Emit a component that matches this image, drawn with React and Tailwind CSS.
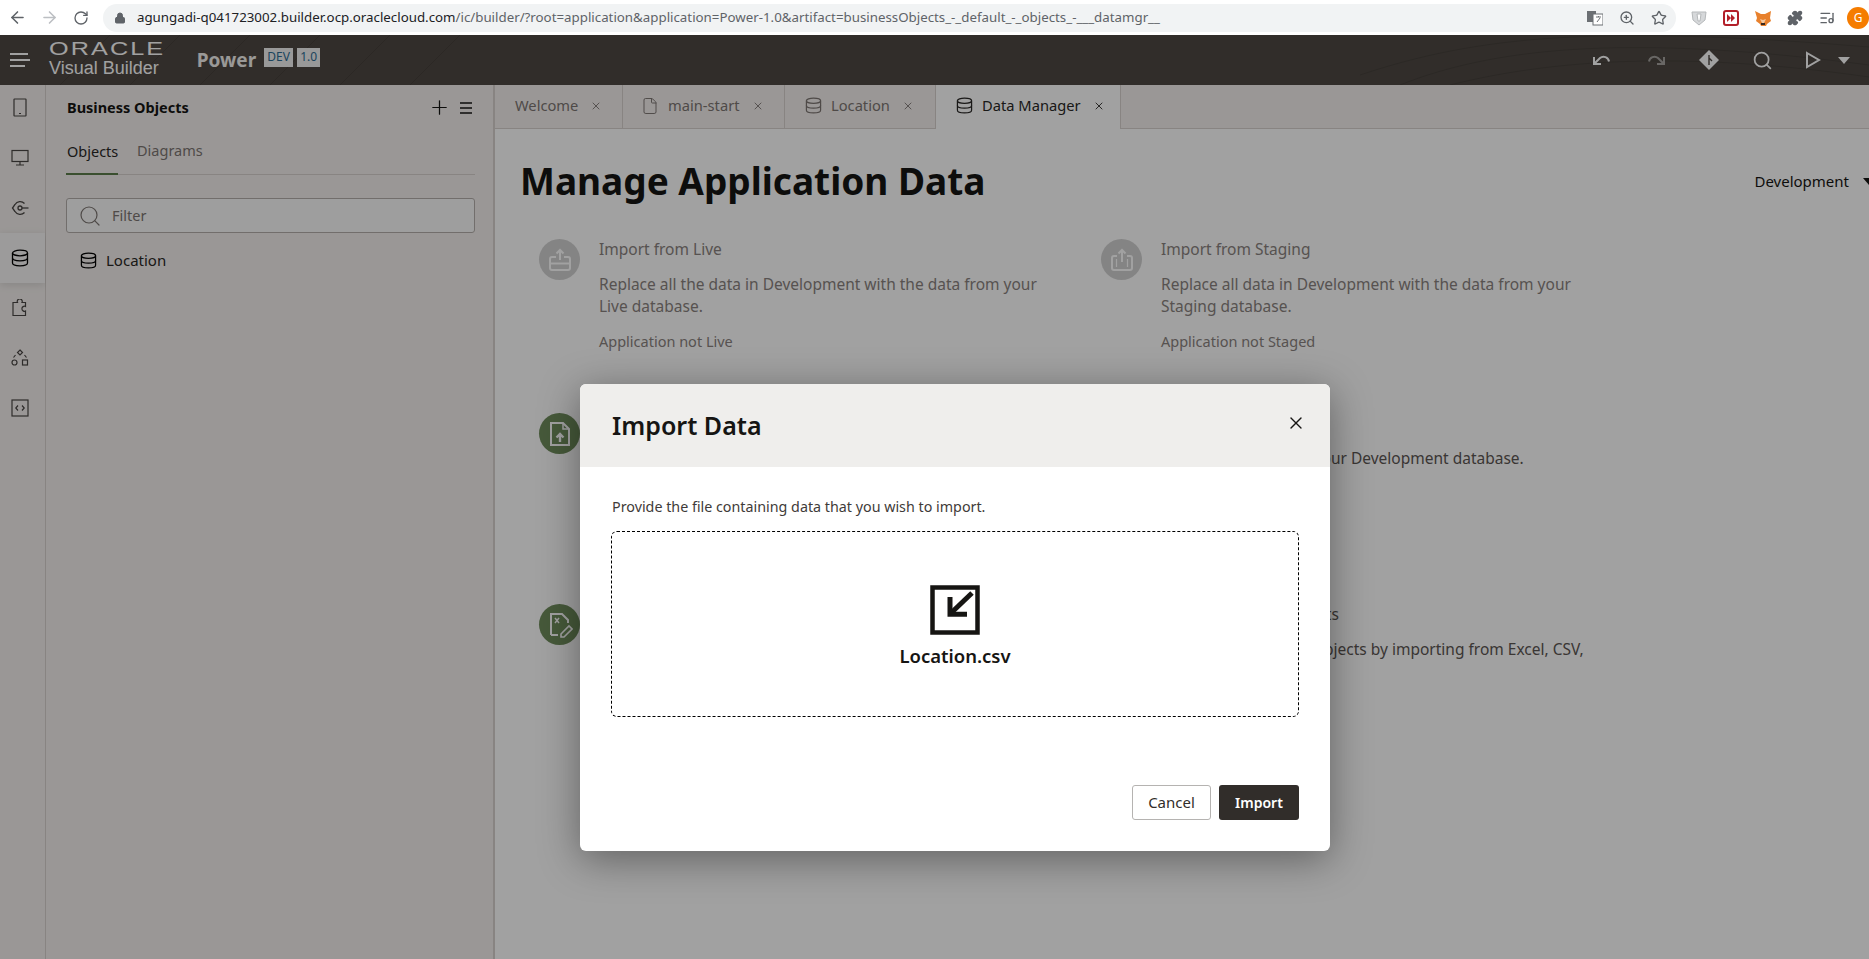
import { ArrowLeft, ArrowRight, RotateCw, Lock, ZoomIn, Star, Puzzle, ListMusic, Search, X, Plus, File } from 'lucide-react';

const DbIcon = ({ className }) => (
    <svg viewBox="0 0 18 18" className={className} fill="none" stroke="currentColor" strokeWidth="1.3">
        <ellipse cx="9" cy="4" rx="7.5" ry="2.8" />
        <path d="M1.5 4v10c0 1.6 3.4 2.8 7.5 2.8s7.5-1.2 7.5-2.8V4" />
        <path d="M1.5 9c0 1.6 3.4 2.8 7.5 2.8s7.5-1.2 7.5-2.8" />
    </svg>
);

const railIcons = [
    <svg key="phone" viewBox="0 0 18 20" className="w-[18px] h-[20px]" fill="none" stroke="currentColor" strokeWidth="1.2"><rect x="3" y="1" width="12" height="17" rx="0.5" /><path d="M8 15.5h2" /></svg>,
    <svg key="monitor" viewBox="0 0 18 18" className="w-[18px] h-[18px]" fill="none" stroke="currentColor" strokeWidth="1.2"><rect x="1" y="1.5" width="16" height="11" /><path d="M9 12.5v3M5 16h8" /></svg>,
    <svg key="service" viewBox="0 0 18 18" className="w-[18px] h-[18px]" fill="none" stroke="currentColor" strokeWidth="1.3"><path d="M13.5 4.5A6 6 0 0 0 4 5.5L1.5 9 4 12.5a6 6 0 0 0 9.5 1" /><circle cx="9" cy="9" r="2" /><path d="M11 9h6.5" /></svg>,
    <DbIcon key="db" className="w-[18px] h-[18px]" />,
    <svg key="puzzle" viewBox="0 0 18 18" className="w-[18px] h-[18px]" fill="none" stroke="currentColor" strokeWidth="1.2"><path d="M2 3.500h4.500a2.500 2.500 0 1 1 4.500 0h3.500v4a2.500 2.500 0 1 0 0 4.500v4.500H2z" /></svg>,
    <svg key="shapes" viewBox="0 0 18 18" className="w-[18px] h-[18px]" fill="none" stroke="currentColor" strokeWidth="1.2"><path d="M9 1l2.500 2.500L9 6 6.500 3.500z" /><circle cx="3.500" cy="13.500" r="2.500" /><rect x="11.500" y="11" width="5" height="5" /><path d="M2.500 8.500L4.500 6M13.500 6l2 2.500" /></svg>,
    <svg key="code" viewBox="0 0 18 18" className="w-[18px] h-[18px]" fill="none" stroke="currentColor" strokeWidth="1.2"><rect x="1" y="1" width="16" height="16" /><path d="M7 6.500L4.800 9 7 11.500M11 6.500L13.200 9 11 11.500" /></svg>,
];

const UploadCircle = ({ variant }) => (
    <div className="w-[41px] h-[41px] shrink-0 rounded-full bg-[#d2d2d2] flex items-center justify-center text-white">
        {variant === 'live' ? (
            <svg viewBox="0 0 26 26" className="w-[26px] h-[26px]" fill="none" stroke="currentColor" strokeWidth="2"><path d="M9 10H5a2 2 0 0 0-2 2v9a2 2 0 0 0 2 2h16a2 2 0 0 0 2-2v-9a2 2 0 0 0-2-2h-4" /><path d="M3 16.500h20" /><path d="M13 13V3M9.500 6.500L13 3l3.500 3.500" /></svg>
        ) : (
            <svg viewBox="0 0 26 26" className="w-[26px] h-[26px]" fill="none" stroke="currentColor" strokeWidth="2"><path d="M8 9H5a2 2 0 0 0-2 2v10a2 2 0 0 0 2 2h16a2 2 0 0 0 2-2V11a2 2 0 0 0-2-2h-3" /><path d="M13 15V3M9.500 6.500L13 3l3.500 3.500" /><path d="M7.500 12v8M18.500 12v8" strokeWidth="1.200" /></svg>
        )}
    </div>
);

const GreenCircle = ({ variant }) => (
    <div className="w-[41px] h-[41px] shrink-0 rounded-full bg-[#6f8d5c] flex items-center justify-center text-white">
        {variant === 'file' ? (
            <svg viewBox="0 0 26 26" className="w-[26px] h-[26px]" fill="none" stroke="currentColor" strokeWidth="2"><path d="M4 2h12l6 6v16H4z" /><path d="M16 2v6h6" strokeWidth="1.500" /><path d="M13 21v-8M9.500 16.500L13 13l3.500 3.500" strokeWidth="2.400" /></svg>
        ) : (
            <svg viewBox="0 0 26 26" className="w-[26px] h-[26px]" fill="none" stroke="currentColor" strokeWidth="2"><path d="M4 23V2h11l6 6v3" /><path d="M4 23h7" /><path d="M8 6l4 5M12 6l-4 5" strokeWidth="1.500" /><path d="M14 22l8-8 3 3-8 8h-3z" strokeWidth="1.600" /></svg>
        )}
    </div>
);

const rows = [
    {
        height: 'h-[174px]',
        left: { icon: <UploadCircle variant="live" />, title: 'Import from Live', desc: 'Replace all the data in Development with the data from your Live database.', note: 'Application not Live' },
        right: { icon: <UploadCircle variant="staging" />, title: 'Import from Staging', desc: 'Replace all data in Development with the data from your Staging database.', note: 'Application not Staged' },
    },
    {
        height: 'h-[191px]',
        left: { icon: <GreenCircle variant="file" />, title: 'Import from File', desc: 'Replace all the data in Development with the data from a file.' },
        right: { title: 'Export All Data', desc: 'Download all data in your Development database.', dark: true },
    },
    {
        height: 'h-[120px]',
        left: { icon: <GreenCircle variant="excel" />, title: 'Create Business Objects', desc: 'Create new business objects from a file.' },
        right: { title: 'Import Business Objects', desc: 'Create new business objects by importing from Excel, CSV, or\u00A0JSON files.', dark: true },
    },
];

const DataItem = ({ item }) => (
    <div className="flex gap-[19px]">
        {item.icon || <div className="w-[41px] h-[41px] shrink-0" />}
        <div className={`w-[452px] text-[15.500px] leading-[22px] ${item.dark ? 'text-[#5c5653]' : 'text-[#8a8380]'}`}>
            <div className="-mt-px">{item.title}</div>
            <div className="mt-[13px]">{item.desc}</div>
            {item.note && <div className="mt-[13px] text-[14.500px]">{item.note}</div>}
        </div>
    </div>
);

const tabs = [
    { label: 'Welcome', width: 'w-[128px]' },
    { label: 'main-start', width: 'w-[162px]', icon: <File className="w-[18px] h-[18px] -ml-[2px]" strokeWidth={1.3} /> },
    { label: 'Location', width: 'w-[151px]', icon: <DbIcon className="w-[17px] h-[17px]" /> },
    { label: 'Data Manager', width: 'w-[185px]', icon: <DbIcon className="w-[17px] h-[17px]" />, active: true },
];

const App = () => {
    return (
        <div className="h-screen w-full flex flex-col overflow-hidden bg-white font-['Noto_Sans',sans-serif]">
            {/* Browser bar */}
            <div className="h-[35px] shrink-0 flex items-center bg-white relative">
                <ArrowLeft className="ml-[8px] w-[19px] h-[19px] text-[#5f6368]" strokeWidth={2} />
                <ArrowRight className="ml-[13px] w-[19px] h-[19px] text-[#bcbfc3]" strokeWidth={2} />
                <RotateCw className="ml-[14px] w-[16px] h-[16px] text-[#5f6368]" strokeWidth={2} />
                <div className="ml-[14px] w-[1575px] h-[28px] rounded-full bg-[#f1f3f4] flex items-center">
                    <Lock className="ml-[11px] w-[12px] h-[12px] text-[#5f6368] fill-[#5f6368]" />
                    <div className="ml-[11px] w-[1040px] text-[13.300px] whitespace-nowrap text-[#5f6368]">
                        <span className="text-[#202124]">agungadi-q041723002.builder.ocp.oraclecloud.com</span>
                        /ic/builder/?root=application&amp;application=Power-1.0&amp;artifact=businessObjects_-_default_-_objects_-___datamgr__
                    </div>
                    <div className="ml-auto mr-[9px] flex items-center gap-[16px] text-[#5f6368]">
                        <svg viewBox="0 0 16 16" className="w-[16px] h-[16px]"><rect x="0" y="1" width="9" height="11" fill="#6b6f73" /><rect x="6" y="4" width="10" height="11" fill="#fff" stroke="#6b6f73" /><path d="M9 7h5M11.500 6v1M10 12l3-4" stroke="#6b6f73" fill="none" /></svg>
                        <ZoomIn className="w-[16px] h-[16px]" strokeWidth={2} />
                        <Star className="w-[16px] h-[16px]" strokeWidth={2} />
                    </div>
                </div>
                <div className="ml-[15px] flex items-center gap-[16px]">
                    <svg viewBox="0 0 16 16" className="w-[16px] h-[16px]" fill="#d6d8da" stroke="#b5b8ba"><path d="M1 2h14l-1 8-6 5-6-5z" /><path d="M6 4h4l-1 7H7z" fill="#fff" /></svg>
                    <div className="w-[16px] h-[16px] rounded-[3px] bg-white border-2 border-[#b3202a] flex items-center justify-center text-[#b3202a]">
                        <svg viewBox="0 0 10 10" className="w-[10px] h-[10px]" fill="currentColor"><path d="M1 1l4 4-4 4zM5 1l4 4-4 4z" /></svg>
                    </div>
                    <svg viewBox="0 0 16 16" className="w-[16px] h-[16px]"><path d="M0 1l6 3h4l6-3-1 7 1 3-4 3-1 2H6l-1-2-4-3 1-3z" fill="#e8812d" /><path d="M5 9l3 1 3-1-2 4H7z" fill="#f5c9a0" /><path d="M6 13h4v2H6z" fill="#3a2a20" /></svg>
                    <Puzzle className="w-[16px] h-[16px] text-[#5f6368] fill-[#5f6368]" />
                    <ListMusic className="w-[16px] h-[16px] text-[#5f6368]" />
                </div>
                <div className="ml-[12px] w-[22px] h-[22px] shrink-0 rounded-full bg-[#f57c00] text-white text-[12px] flex items-center justify-center">G</div>
            </div>

            <div className="relative flex-1 flex flex-col min-h-0">
                {/* App header */}
                <div className="relative h-[50px] shrink-0 bg-[#4e4843] flex items-center text-white overflow-hidden">
                    <svg className="absolute inset-0 w-full h-full" fill="none" stroke="#000" strokeOpacity="0.1">
                        <path d="M60 50L110 0M130 50L180 0M200 50L250 0M270 50L320 0M340 50L390 0M410 50L460 0" />
                        <path d="M1400 50C1500 10 1640 0 1869 30M1450 50C1550 25 1680 15 1869 42M1360 40C1480 0 1600 -10 1869 12" />
                    </svg>
                    <svg viewBox="0 0 20 14" className="relative ml-[10px] w-[20px] h-[14px]" fill="none" stroke="currentColor" strokeWidth="2"><path d="M0 1h18M0 7h20M0 13h15" /></svg>
                    <div className="relative ml-[19px] flex flex-col leading-none">
                        <span className="font-['Liberation_Sans'] text-[18px] leading-[17px] tracking-[1.500px] scale-x-[1.400] origin-left -mt-px">ORACLE</span>
                        <span className="font-['Liberation_Sans'] text-[18px] leading-[21px]">Visual Builder</span>
                    </div>
                    <span className="relative ml-[38px] text-[19px] font-bold text-[#f4f2f0]">Power</span>
                    <span className="relative ml-[8px] -mt-[6px] w-[29px] h-[19px] bg-[#f2f2f2] text-[#2f6d94] text-[12px] flex items-center justify-center">DEV</span>
                    <span className="relative ml-[4px] -mt-[6px] w-[23px] h-[19px] bg-[#f2f2f2] text-[#2f6d94] text-[12px] flex items-center justify-center">1.0</span>
                    <div className="relative ml-auto flex items-center">
                        <svg viewBox="0 0 20 18" className="w-[20px] h-[18px]" fill="none" stroke="#fff" strokeWidth="2"><path d="M2 6v7h7" /><path d="M2.500 12.500L8 7a5.500 5.500 0 0 1 9 3.500" /></svg>
                        <svg viewBox="0 0 20 18" className="ml-[34px] w-[20px] h-[18px] opacity-50" fill="none" stroke="#fff" strokeWidth="2"><path d="M18 6v7h-7" /><path d="M17.500 12.500L12 7a5.500 5.500 0 0 0-9 3.500" /></svg>
                        <svg viewBox="0 0 20 20" className="ml-[33px] w-[20px] h-[20px]"><path d="M10 0l10 10-10 10L0 10z" fill="#fff" /><path d="M10 5v10M10 8l3 3" stroke="#4e4843" strokeWidth="1.400" fill="none" /></svg>
                        <Search className="ml-[33px] w-[21px] h-[21px]" strokeWidth={2} />
                        <svg viewBox="0 0 16 18" className="ml-[32px] w-[16px] h-[18px]" fill="none" stroke="#fff" strokeWidth="2"><path d="M2 2l12 7-12 7z" /></svg>
                        <svg viewBox="0 0 12 7" className="ml-[17px] mr-[19px] w-[12px] h-[7px]" fill="#fff"><path d="M0 0h12L6 7z" /></svg>
                    </div>
                </div>

                <div className="flex-1 flex min-h-0">
                    {/* Navigator rail */}
                    <div className="w-[46px] shrink-0 bg-[#f4f0ee] border-r border-[#d8d2cf] flex flex-col -mt-[2px] text-[#4a4644]">
                        {railIcons.map((icon, i) => (
                            <div key={i} className={`h-[50px] flex items-center justify-center pr-[5px] ${i === 3 ? 'bg-[#f8f6f5] shadow-[0_2px_8px_rgba(0,0,0,0.12)] text-black' : ''}`}>
                                {icon}
                            </div>
                        ))}
                    </div>

                    {/* Business objects panel */}
                    <div className="w-[449px] shrink-0 bg-[#f4f0ee] border-r-2 border-[#d8d2cf] pl-[21px] pr-[18px]">
                        <div className="h-[45px] flex items-center justify-between">
                            <span className="text-[14.500px] font-bold text-[#161513]">Business Objects</span>
                            <div className="flex items-center gap-[9px] text-[#161513]">
                                <Plus className="w-[23px] h-[23px]" strokeWidth={1.300} />
                                <svg viewBox="0 0 12 12" className="w-[12px] h-[12px] mr-[3px]" fill="none" stroke="currentColor" strokeWidth="1.500"><path d="M0 1h12M0 6h12M0 11h12" /></svg>
                            </div>
                        </div>
                        <div className="h-[45px] flex items-end gap-[19px] border-b border-[#d8d2cf] text-[14.500px] -ml-px">
                            <div className="h-[45px] pt-[11px] pl-px border-b-2 border-[#5c7d4b] -mb-px text-[#2a2826] w-[52px]">Objects</div>
                            <div className="h-[45px] pt-[11px] text-[#7d7673]">Diagrams</div>
                        </div>
                        <div className="mt-[23px] -ml-px h-[35px] rounded-[3px] border border-[#b5aeab] bg-[#fbfbfa] flex items-center text-[#7d7673]">
                            <Search className="ml-[11px] w-[24px] h-[24px]" strokeWidth={1.200} />
                            <span className="ml-[10px] text-[14.500px]">Filter</span>
                        </div>
                        <div className="mt-[16px] ml-[13px] flex items-center gap-[9px] text-[#2a2826] text-[15px]">
                            <DbIcon className="w-[17px] h-[17px] text-black" />
                            <span>Location</span>
                        </div>
                    </div>

                    {/* Main area */}
                    <div className="flex-1 min-w-0 bg-white flex flex-col overflow-hidden">
                        <div className="h-[44px] shrink-0 bg-[#f4f0ee] border-b border-[#d8d2cf] flex">
                            {tabs.map((tab) => (
                                <div key={tab.label} className={`${tab.width} shrink-0 flex items-center pl-[20px] gap-[9px] border-r border-[#d8d2cf] text-[14.700px] ${tab.active ? 'bg-white -mb-px pb-[3px] text-[#2a2826]' : 'pb-[2px] text-[#7d7673]'}`}>
                                    {tab.icon}
                                    <span>{tab.label}</span>
                                    <X className="ml-[3px] w-[12px] h-[12px]" strokeWidth={1.800} />
                                </div>
                            ))}
                        </div>
                        <div className="flex-1 pl-[26px]">
                            <div className="pt-[26px] h-[110px] flex items-start justify-between">
                                <h1 className="-ml-px text-[37px] leading-[52px] font-bold text-[#161513]">Manage Application Data</h1>
                                <div className="mt-[15px] -mr-[6px] flex items-center gap-[14px] text-[15px] text-[#161513]">
                                    <span>Development</span>
                                    <svg viewBox="0 0 12 7" className="w-[12px] h-[7px]" fill="#161513"><path d="M0 0h12L6 7z" /></svg>
                                </div>
                            </div>
                            <div className="pl-[18px]">
                                {rows.map((row, i) => (
                                    <div key={i} className={`${row.height} grid grid-cols-[562px_1fr]`}>
                                        <DataItem item={row.left} />
                                        <DataItem item={row.right} />
                                    </div>
                                ))}
                            </div>
                        </div>
                    </div>
                </div>

                {/* Modal */}
                <div className="absolute inset-0 bg-black/[0.37]">
                    <div className="ml-[580px] mt-[349px] w-[750px] h-[467px] rounded-[6px] bg-white shadow-[0_8px_40px_rgba(0,0,0,0.4)] flex flex-col overflow-hidden">
                        <div className="h-[83px] shrink-0 bg-[#efeeec] flex items-center justify-between pl-[32px] pr-[24px]">
                            <h2 className="text-[25px] font-semibold text-[#161513]">Import Data</h2>
                            <X className="w-[20px] h-[20px] text-[#161513] -mt-[5px]" strokeWidth={1.600} />
                        </div>
                        <div className="flex-1 flex flex-col pl-[31px] pr-[31px]">
                            <p className="mt-[29px] pl-px text-[14.300px] leading-[22px] text-[#3f3b39]">Provide the file containing data that you wish to import.</p>
                            <div className="mt-[13px] h-[186px] rounded-[6px] border border-dashed border-black flex flex-col items-center pt-[53px]">
                                <svg viewBox="0 0 50 50" className="w-[50px] h-[50px]" fill="none" stroke="#161513">
                                    <rect x="2.500" y="2.500" width="45" height="45" strokeWidth="4.500" />
                                    <path d="M42 8L20 29" strokeWidth="5" />
                                    <path d="M20 12v17.300h17" strokeWidth="5" />
                                </svg>
                                <span className="mt-[8px] text-[18.500px] leading-[26px] font-semibold text-[#161513]">Location.csv</span>
                            </div>
                            <div className="mt-[68px] flex justify-end gap-[8px]">
                                <button className="w-[79px] h-[35px] rounded-[3px] border border-[#b5b3b1] bg-white text-[15px] text-[#312d2a]">Cancel</button>
                                <button className="w-[80px] h-[35px] rounded-[3px] bg-[#312d2a] text-[14px] font-semibold text-white">Import</button>
                            </div>
                        </div>
                    </div>
                </div>
            </div>
        </div>
    );
};

export default App;
